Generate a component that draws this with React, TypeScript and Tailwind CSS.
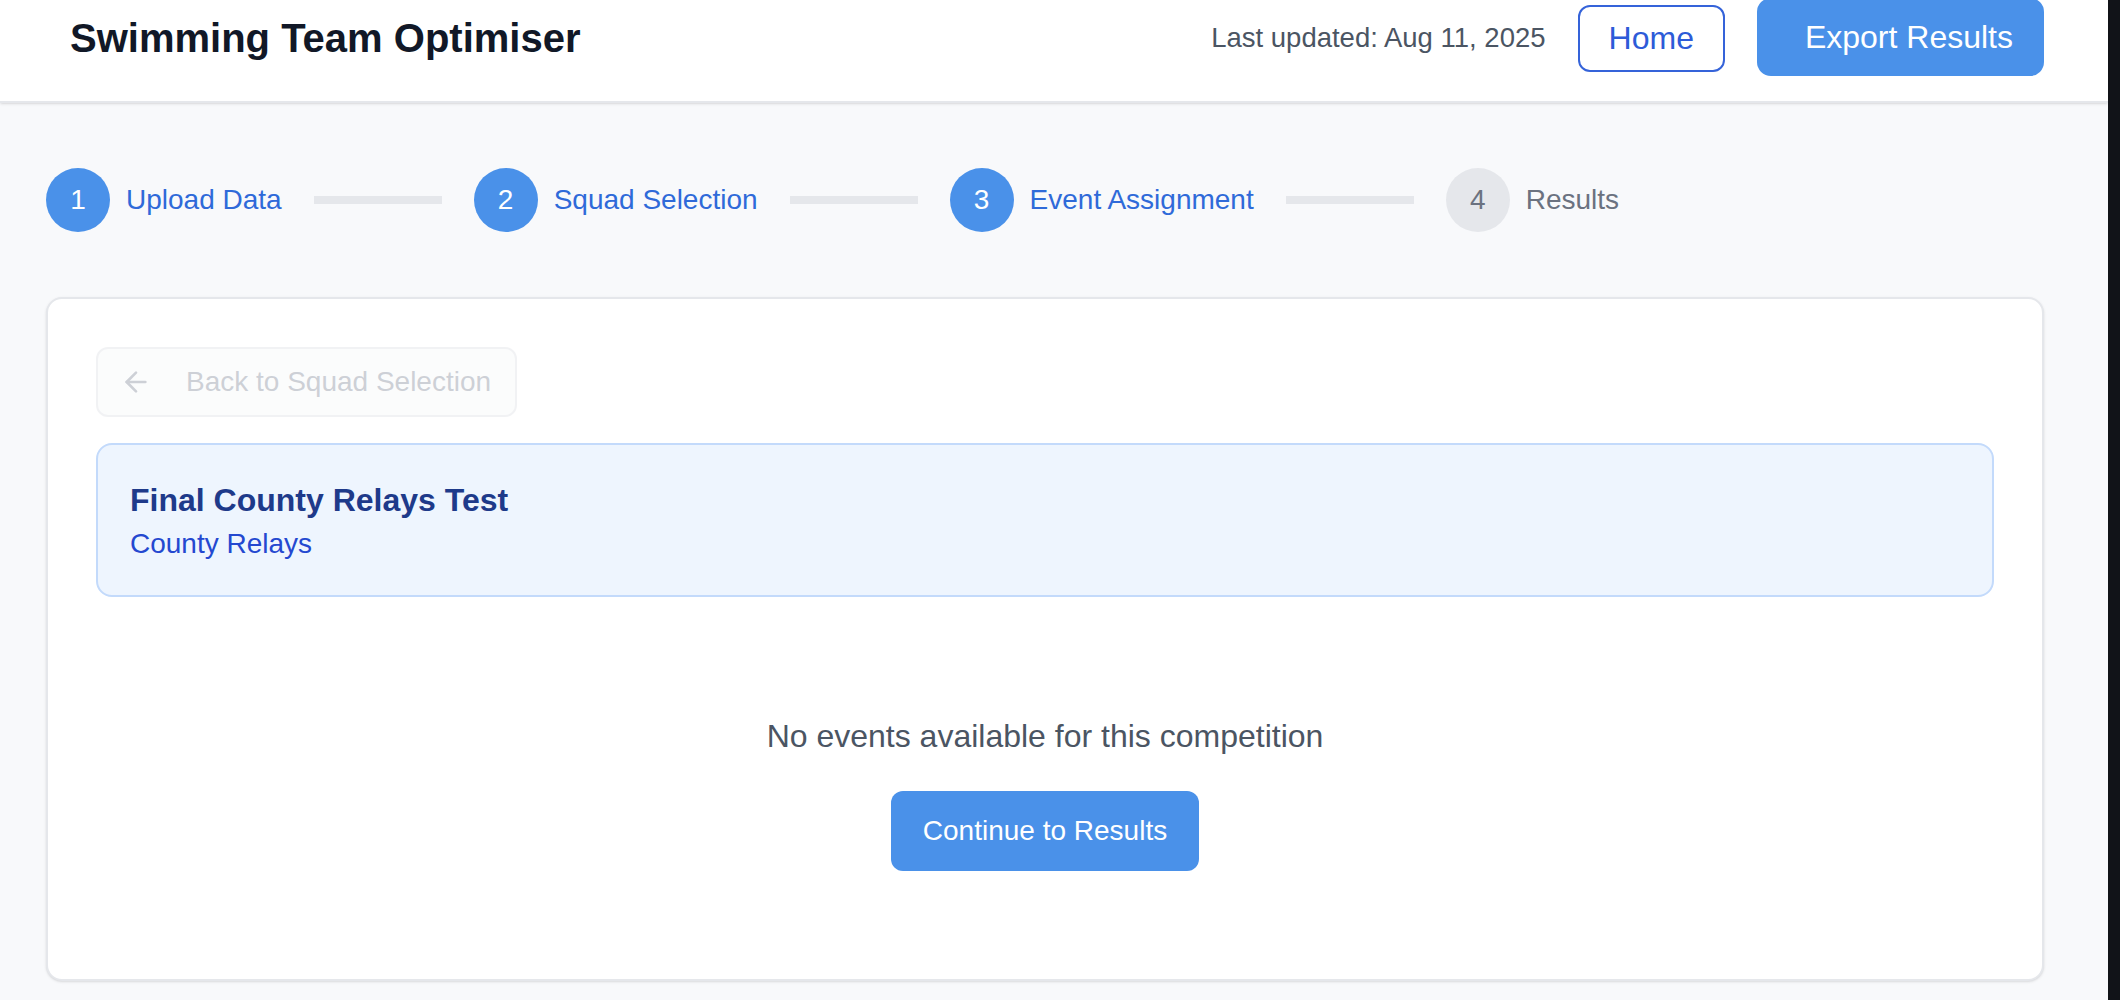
import React from "react";
import { ArrowLeft } from "lucide-react";

interface Step {
  n: number;
  label: string;
  active: boolean;
}

const steps: Step[] = [
  { n: 1, label: "Upload Data", active: true },
  { n: 2, label: "Squad Selection", active: true },
  { n: 3, label: "Event Assignment", active: true },
  { n: 4, label: "Results", active: false },
];

const Stepper: React.FC = () => {
  return (
    <div className="flex flex-row items-center">
      {steps.map((step, index) => (
        <React.Fragment key={step.n}>
          <div className="flex flex-row items-center">
            <div
              className={
                step.active
                  ? "w-[64px] h-[64px] rounded-full bg-[#4a91e9] text-white flex items-center justify-center text-[28px]"
                  : "w-[64px] h-[64px] rounded-full bg-[#e5e7eb] text-[#6b7280] flex items-center justify-center text-[28px]"
              }
            >
              {step.n}
            </div>
            <span
              className={
                step.active
                  ? "ml-[16px] text-[28px] text-[#2f6ad9]"
                  : "ml-[16px] text-[28px] text-[#6b7280]"
              }
            >
              {step.label}
            </span>
          </div>
          {index < steps.length - 1 && (
            <div className="ml-[32px] mr-[32px] w-[128px] h-[8px] bg-[#e5e7eb]" />
          )}
        </React.Fragment>
      ))}
    </div>
  );
};

export default function App() {
  return (
    <div
      className="flex flex-row min-h-screen w-full bg-[#f8f9fb]"
      style={{ fontFamily: '"Liberation Sans", Arial, sans-serif' }}
    >
      <div className="flex-1 flex flex-col">
        {/* Header */}
        <header className="bg-white border-b-2 border-[#e5e7eb] shadow-sm h-[103px] pl-[70px] pr-[64px]">
          <div className="h-[76px] flex flex-row items-center justify-between">
            <h1 className="text-[40px] font-bold text-[#111827] leading-[48px]">
              Swimming Team Optimiser
            </h1>
            <div className="flex flex-row items-center gap-[32px]">
              <span className="text-[27.5px] text-[#4b5563]">
                Last updated: Aug 11, 2025
              </span>
              <button className="h-[67px] px-[29px] border-2 border-[#3563d9] rounded-[12px] text-[32px] text-[#2d5bd8] bg-white">
                Home
              </button>
              <button className="h-[78px] -mt-[2px] pl-[48px] pr-[31px] rounded-[14px] bg-[#4a91e9] text-white text-[32px]">
                Export Results
              </button>
            </div>
          </div>
        </header>

        {/* Main */}
        <main className="pl-[46px] pr-[64px] pt-[65px]">
          <Stepper />

          <div className="mt-[65px] bg-white border-2 border-[#e5e7eb] rounded-[16px] shadow-sm p-[48px]">
            <button
              disabled
              className="flex flex-row items-center h-[70px] pl-[22px] pr-[24px] border-2 border-[#e5e7eb] rounded-[12px] bg-[#f9fafb] opacity-50"
            >
              <ArrowLeft className="w-[32px] h-[32px] text-[#9ca3af]" strokeWidth={2} />
              <span className="ml-[34px] text-[28px] text-[#9ca3af]">
                Back to Squad Selection
              </span>
            </button>

            <div className="mt-[26px] bg-[#eef5fe] border-2 border-[#c3dafb] rounded-[16px] px-[32px] py-[31px]">
              <h2 className="text-[32px] leading-[48px] font-bold text-[#1e3a8a]">
                Final County Relays Test
              </h2>
              <p className="text-[28px] leading-[40px] text-[#2448d0]">
                County Relays
              </p>
            </div>

            <div className="flex flex-col items-center pt-[115px] pb-[60px]">
              <p className="text-[32px] leading-[48px] text-[#4b5563]">
                No events available for this competition
              </p>
              <button className="mt-[31px] h-[80px] px-[32px] rounded-[12px] bg-[#4a91e9] text-white text-[28px]">
                Continue to Results
              </button>
            </div>
          </div>
        </main>
      </div>
      <div className="w-[12px] bg-[#111318]" />
    </div>
  );
}
